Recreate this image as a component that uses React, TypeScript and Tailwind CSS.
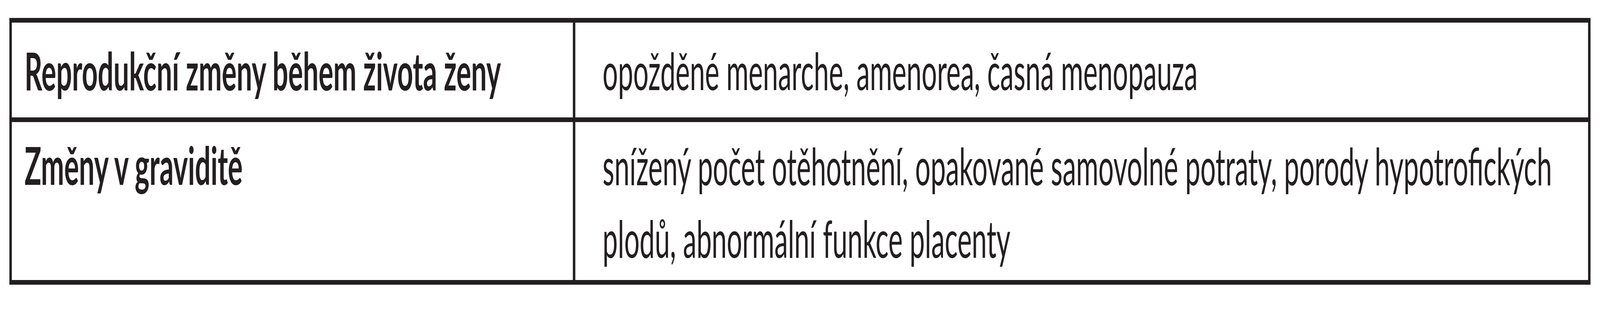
import React from "react";

type Row = { label: string; value: string; head: string; body: string };

const rows: Row[] = [
  {
    label: "Reprodukční změny během života ženy",
    value: "opožděné menarche, amenorea, časná menopauza",
    head: "flex items-center pl-[62px] pr-[40px]",
    body: "flex items-center pl-[133px] pr-[40px]",
  },
  {
    label: "Změny v graviditě",
    value:
      "snížený počet otěhotnění, opakované samovolné potraty, porody hypotrofických plodů, abnormální funkce placenty",
    head: "pt-[16px] pl-[62px] pr-[40px]",
    body: "pt-[18px] pl-[133px] pr-[40px]",
  },
];

export default function App() {
  return (
    <div className="min-h-screen w-full overflow-hidden bg-white pt-[46px] pl-[24px] font-['Lato',sans-serif] text-[#231f20]">
      {/* The frame is 4096px wide; the reference is 7803px wide, so the table is drawn at
          reference size and narrowed horizontally to the same share of the frame. */}
      <div className="grid w-[7711px] origin-top-left scale-x-[0.52493] grid-cols-[2736px_4939px] grid-rows-[243px_405px] gap-[12px] bg-[#231f20] p-[12px]">
        {rows.map((r) => (
          <React.Fragment key={r.label}>
            <div className={"bg-white text-[135px] font-bold leading-[186px] " + r.head}>
              <span>{r.label}</span>
            </div>
            <div className={"bg-white text-[132.3px] font-normal leading-[186px] " + r.body}>
              <span>{r.value}</span>
            </div>
          </React.Fragment>
        ))}
      </div>
    </div>
  );
}
